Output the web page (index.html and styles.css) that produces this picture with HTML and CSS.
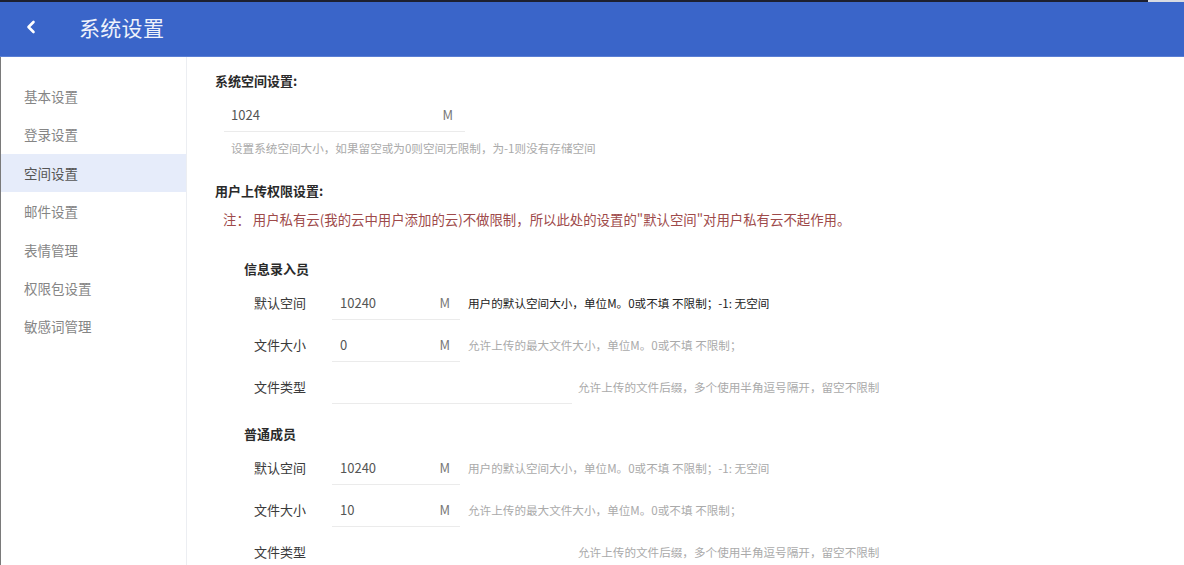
FILE: index.html
```html
<!DOCTYPE html>
<html lang="zh-CN">
<head>
<meta charset="utf-8">
<title>系统设置</title>
<link rel="stylesheet" href="styles.css">
</head>
<body>
<div class="topline"><div class="topline-dark"></div><div class="topline-light"></div></div>
<header class="header">
  <span class="back">
    <svg width="12" height="14" viewBox="0 0 12 14"><path d="M8.5 2 L3.5 7 L8.5 12" fill="none" stroke="#fff" stroke-width="2.6" stroke-linecap="round" stroke-linejoin="round"/></svg>
  </span>
  <h1 class="title">系统设置</h1>
</header>
<div class="main">
  <nav class="sidebar">
    <div class="nav-item">基本设置</div>
    <div class="nav-item">登录设置</div>
    <div class="nav-item active">空间设置</div>
    <div class="nav-item">邮件设置</div>
    <div class="nav-item">表情管理</div>
    <div class="nav-item">权限包设置</div>
    <div class="nav-item">敏感词管理</div>
  </nav>
  <section class="content">
    <div class="sec-title">系统空间设置:</div>
    <div class="sys-field"><span class="val">1024</span><span class="unit">M</span></div>
    <div class="hint">设置系统空间大小，如果留空或为0则空间无限制，为-1则没有存储空间</div>
    <div class="sec-title sec-gap">用户上传权限设置:</div>
    <div class="note">注： 用户私有云(我的云中用户添加的云)不做限制，所以此处的设置的"默认空间"对用户私有云不起作用。</div>

    <div class="group">
      <div class="group-title">信息录入员</div>
      <div class="row">
        <span class="label">默认空间</span>
        <div class="field"><span class="val">10240</span><span class="unit">M</span></div>
        <span class="desc dark">用户的默认空间大小，单位M。0或不填 不限制；-1: 无空间</span>
      </div>
      <div class="row">
        <span class="label">文件大小</span>
        <div class="field"><span class="val">0</span><span class="unit">M</span></div>
        <span class="desc">允许上传的最大文件大小，单位M。0或不填 不限制；</span>
      </div>
      <div class="row">
        <span class="label">文件类型</span>
        <div class="field wide"><span class="val"></span></div>
        <span class="desc near">允许上传的文件后缀，多个使用半角逗号隔开，留空不限制</span>
      </div>
    </div>

    <div class="group group2">
      <div class="group-title">普通成员</div>
      <div class="row">
        <span class="label">默认空间</span>
        <div class="field"><span class="val">10240</span><span class="unit">M</span></div>
        <span class="desc">用户的默认空间大小，单位M。0或不填 不限制；-1: 无空间</span>
      </div>
      <div class="row">
        <span class="label">文件大小</span>
        <div class="field"><span class="val">10</span><span class="unit">M</span></div>
        <span class="desc">允许上传的最大文件大小，单位M。0或不填 不限制；</span>
      </div>
      <div class="row">
        <span class="label">文件类型</span>
        <div class="field wide"><span class="val"></span></div>
        <span class="desc near">允许上传的文件后缀，多个使用半角逗号隔开，留空不限制</span>
      </div>
    </div>
  </section>
</div>
</body>
</html>
```
FILE: styles.css
```css
* { box-sizing: border-box; }
html, body { margin: 0; padding: 0; }
body {
  width: 1184px;
  height: 565px;
  overflow: hidden;
  background: #fff;
  font-family: "Noto Sans CJK SC", "Noto Sans", sans-serif;
  color: #333;
}
.topline { display: flex; height: 2px; }
.topline-dark { flex: 1; background: #1d2030; }
.topline-light { width: 36px; background: #d8dbe2; }
.header {
  height: 55px;
  background: #3a65c9;
  display: flex;
  align-items: center;
  padding-bottom: 5px;
  border-bottom: 1px solid #5a7fd4;
}
.back {
  width: 79px;
  padding-left: 25px;
  display: flex;
  align-items: center;
  height: 100%;
}
.title {
  margin: 0;
  font-size: 21px;
  font-weight: 400;
  color: #eef2fb;
  letter-spacing: 0.3px;
}
.main {
  display: flex;
  height: 508px;
  border-left: 1px solid #7a7a7a;
}
.sidebar {
  width: 186px;
  border-right: 1px solid #eceef2;
  padding-top: 20px;
  flex-shrink: 0;
}
.nav-item {
  height: 38.4px;
  line-height: 38.4px;
  padding-left: 23px;
  font-size: 13.5px;
  color: #858585;
}
.nav-item.active { background: #e6ecfa; color: #555; }
.content {
  flex: 1;
  padding: 14px 0 0 28px;
}
.sec-title {
  font-size: 13px;
  font-weight: 700;
  line-height: 20px;
  color: #2a2a2a;
}
.sec-gap { margin-top: 24px; }
.sys-field {
  width: 241px;
  margin-left: 9px;
  height: 41px;
  padding: 8px 12px 0 7px;
  line-height: 32px;
  border-bottom: 1px solid #ebebeb;
  display: flex;
  justify-content: space-between;
  font-size: 13px;
}
.val { color: #555; font-size: 13px; }
.unit { color: #777; font-size: 13px; }
.hint {
  margin-top: 7px;
  margin-left: 16px;
  font-size: 11.6px;
  line-height: 18px;
  color: #aaa;
}
.note {
  margin-top: 8px;
  margin-left: 8px;
  font-size: 13.4px;
  line-height: 20px;
  color: #9e4a4a;
}
.group { margin-top: 30px; margin-left: 29px; }
.group2 { margin-top: 20px; }
.group-title {
  font-size: 13px;
  font-weight: 700;
  line-height: 20px;
  color: #2a2a2a;
  margin-bottom: 8px;
}
.row {
  display: flex;
  align-items: flex-start;
  margin-bottom: 9px;
  padding-left: 10px;
}
.label {
  width: 78px;
  line-height: 32px;
  font-size: 13px;
  color: #3a3a3a;
}
.field {
  width: 128px;
  height: 33px;
  line-height: 32px;
  padding: 0 10px 0 8px;
  border-bottom: 1px solid #ebebeb;
  display: flex;
  justify-content: space-between;
}
.field.wide { width: 240px; }
.desc {
  margin-left: 8px;
  line-height: 32px;
  font-size: 11.6px;
  color: #aaa;
}
.desc.dark { color: #222; }
.desc.near { margin-left: 6px; }
```
